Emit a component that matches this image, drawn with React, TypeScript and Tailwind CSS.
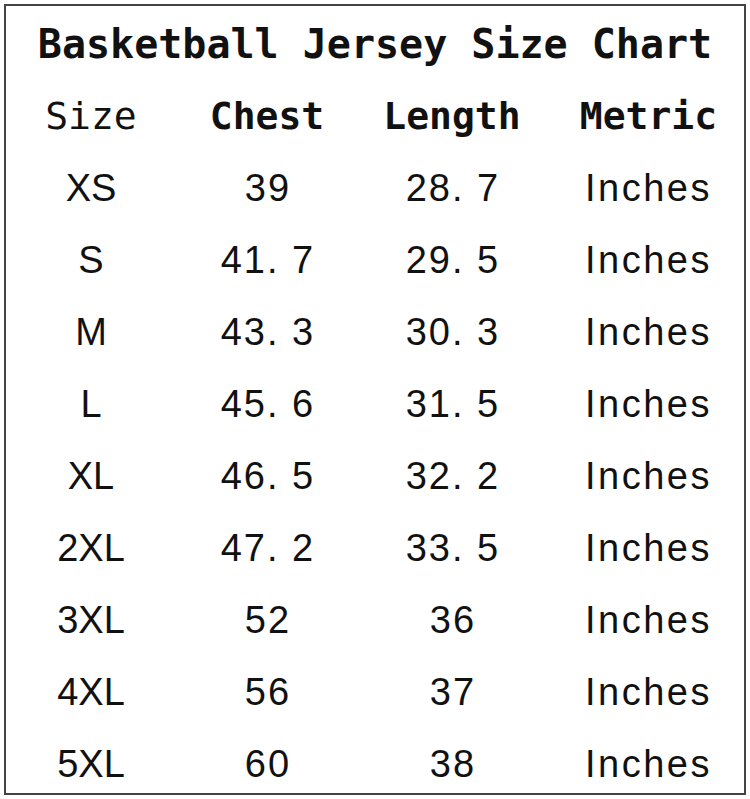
import React from "react";

const rows: [string, string, string][] = [
  ["XS", "39", "28. 7"],
  ["S", "41. 7", "29. 5"],
  ["M", "43. 3", "30. 3"],
  ["L", "45. 6", "31. 5"],
  ["XL", "46. 5", "32. 2"],
  ["2XL", "47. 2", "33. 5"],
  ["3XL", "52", "36"],
  ["4XL", "56", "37"],
  ["5XL", "60", "38"],
];

const mono = { fontFamily: '"DejaVu Sans Mono", monospace' };
const sans = { fontFamily: '"Liberation Sans", Arial, sans-serif' };

export default function App() {
  return (
    <div className="w-[750px] h-[799px] bg-white p-[4px]">
      <div className="w-[742px] h-[791px] border-2 border-[#444] overflow-hidden pt-[2px] text-[#111]">
        <div className="h-[72px] flex items-center justify-center">
          <span className="text-[40px] font-bold leading-none" style={mono}>
            Basketball Jersey Size Chart
          </span>
        </div>
        <div className="grid grid-cols-[170px_182px_188px_1fr] h-[72px] items-center text-[38px] leading-none" style={mono}>
          <div className="text-center">Size</div>
          <div className="text-center font-bold">Chest</div>
          <div className="text-center font-bold">Length</div>
          <div className="text-center font-bold pl-[7px]">Metric</div>
        </div>
        {rows.map(([s, c, l]) => (
          <div
            key={s}
            className="grid grid-cols-[170px_182px_188px_1fr] h-[72px] shrink-0 items-center text-[38px] leading-none"
            style={sans}
          >
            <div className="text-center">{s}</div>
            <div className="text-center tracking-[2px] pl-[2px]">{c}</div>
            <div className="text-center tracking-[2px] pl-[2px]">{l}</div>
            <div className="text-center pl-[7px] tracking-[2.5px]">Inches</div>
          </div>
        ))}
      </div>
    </div>
  );
}
